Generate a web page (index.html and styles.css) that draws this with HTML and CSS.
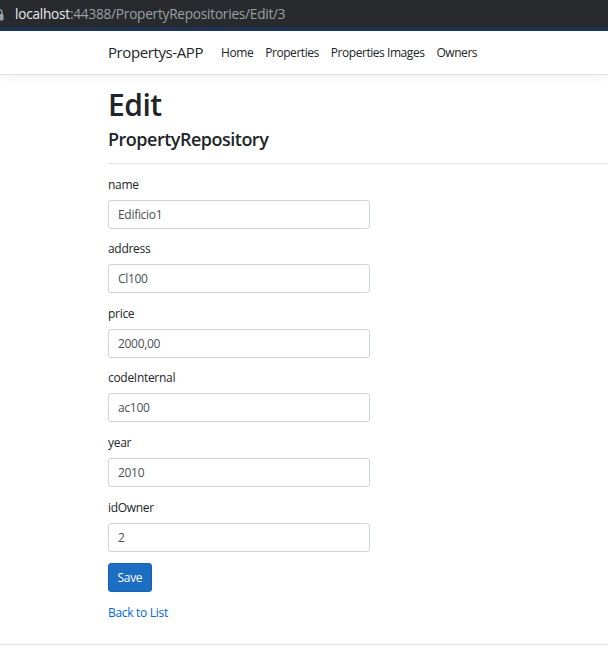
FILE: index.html
```html
<!DOCTYPE html>
<html lang="en">
<head>
<meta charset="utf-8">
<title>Edit - Propertys-APP</title>
<link rel="stylesheet" href="styles.css">
</head>
<body>
<div class="chrome">
  <svg class="lock" width="10" height="12" viewBox="0 0 10 12"><path d="M2 5V3.5a3 3 0 0 1 6 0V5" fill="none" stroke="#9aa0a6" stroke-width="1.4"/><rect x="0.5" y="5" width="9" height="6.5" rx="1" fill="#9aa0a6"/></svg>
  <span class="url"><span class="host">localhost</span>:44388/PropertyRepositories/Edit/3</span>
</div>
<header class="navbar">
  <a class="brand" href="#">Propertys-APP</a>
  <ul class="nav">
    <li><a class="nav-link" href="#">Home</a></li>
    <li><a class="nav-link" href="#">Properties</a></li>
    <li><a class="nav-link" href="#">Properties Images</a></li>
    <li><a class="nav-link" href="#">Owners</a></li>
  </ul>
</header>
<main class="main">
  <h1 class="title">Edit</h1>
  <h4 class="subtitle">PropertyRepository</h4>
  <hr class="rule">
  <form class="form">
    <div class="form-group">
      <label class="label">name</label>
      <input class="form-control" type="text" value="Edificio1">
    </div>
    <div class="form-group">
      <label class="label">address</label>
      <input class="form-control" type="text" value="Cl100">
    </div>
    <div class="form-group">
      <label class="label">price</label>
      <input class="form-control" type="text" value="2000,00">
    </div>
    <div class="form-group">
      <label class="label">codeInternal</label>
      <input class="form-control" type="text" value="ac100">
    </div>
    <div class="form-group">
      <label class="label">year</label>
      <input class="form-control" type="text" value="2010">
    </div>
    <div class="form-group">
      <label class="label">idOwner</label>
      <input class="form-control" type="text" value="2">
    </div>
    <div class="form-group">
      <button class="btn" type="button">Save</button>
    </div>
  </form>
  <div class="back"><a class="link" href="#">Back to List</a></div>
</main>
<footer class="footer"></footer>
</body>
</html>
```
FILE: styles.css
```css
* { box-sizing: border-box; }
html, body { margin: 0; padding: 0; }
body {
  font-family: "Open Sans", "Noto Sans", sans-serif;
  font-size: 12px;
  line-height: 1.5;
  letter-spacing: -0.3px;
  color: #212529;
  background: #fff;
  width: 608px;
  height: 651px;
  overflow: hidden;
}
.chrome {
  height: 31px;
  background: #292a2d;
  border-bottom: 4px solid #1c3557;
  display: flex;
  align-items: center;
  padding-left: 15px;
  position: relative;
}
.lock { position: absolute; left: -6px; top: 9px; }
.url {
  font-size: 13.6px;
  letter-spacing: -0.22px;
  color: #9aa0a6;
  line-height: 1;
  padding-top: 1px;
}
.host { color: #e8eaed; }
.navbar {
  display: flex;
  align-items: center;
  height: 44px;
  padding-left: 108px;
  border-bottom: 1px solid #dee2e6;
  box-shadow: 0 3px 9px rgba(0,0,0,.05);
  margin-bottom: 12px;
}
.brand {
  font-size: 15px;
  letter-spacing: -0.4px;
  color: #212529;
  text-decoration: none;
  margin-right: 12px;
}
.nav { display: flex; list-style: none; margin: 0; padding: 0; }
.nav-link {
  display: block;
  padding: 6px;
  color: #212529;
  text-decoration: none;
  font-size: 12px;
  letter-spacing: -0.45px;
}
.main { padding-left: 108px; padding-bottom: 12px; }
.title {
  font-size: 30px;
  font-weight: 600;
  line-height: 1.2;
  letter-spacing: -0.5px;
  margin: 1px 0 6px;
}
.subtitle {
  font-size: 18px;
  font-weight: 600;
  line-height: 1.2;
  letter-spacing: -0.5px;
  margin: 0 0 4px;
}
.rule {
  border: 0;
  border-top: 1px solid rgba(0,0,0,.1);
  margin: 12px 0;
}
.form { width: 262px; }
.form-group { margin-bottom: 11.6px; }
.label { display: inline-block; margin-bottom: 6px; }
.form-control {
  display: block;
  width: 100%;
  height: 29px;
  padding: 4.5px 9px;
  font-family: inherit;
  font-size: 12px;
  letter-spacing: -0.3px;
  line-height: 1.5;
  color: #495057;
  background: #fff;
  border: 1px solid #ced4da;
  border-radius: 3px;
}
.btn {
  font-family: inherit;
  font-size: 12px;
  letter-spacing: -0.3px;
  line-height: 1.5;
  height: 29px;
  padding: 4px 8.5px;
  color: #fff;
  background: #1b6ec2;
  border: 1px solid #1861ac;
  border-radius: 3px;
}
.back { padding-top: 0; }
.link { color: #0366d6; text-decoration: none; }
.footer {
  border-top: 1px solid #dee2e6;
  margin-top: 10px;
}
```
